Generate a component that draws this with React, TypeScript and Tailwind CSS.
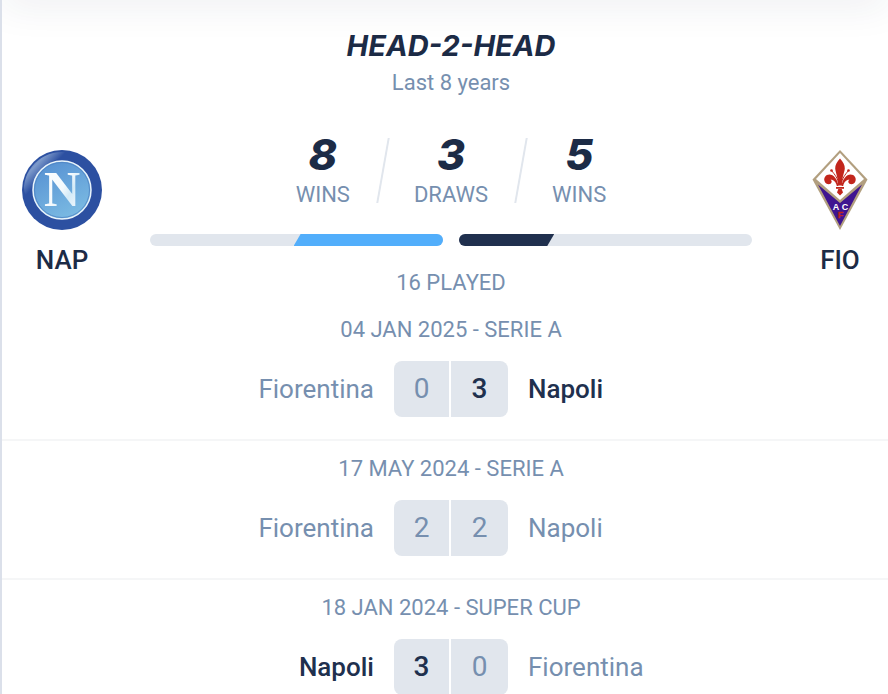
import clsx from "clsx";

const stats = [
  { value: 8, label: "WINS" },
  { value: 3, label: "DRAWS" },
  { value: 5, label: "WINS" },
];

const matches = [
  { date: "04 JAN 2025 - SERIE A", home: "Fiorentina", away: "Napoli", homeGoals: 0, awayGoals: 3 },
  { date: "17 MAY 2024 - SERIE A", home: "Fiorentina", away: "Napoli", homeGoals: 2, awayGoals: 2 },
  { date: "18 JAN 2024 - SUPER CUP", home: "Napoli", away: "Fiorentina", homeGoals: 3, awayGoals: 0 },
];

function NapoliCrest() {
  return (
    <svg viewBox="0 0 80 80" className="size-20" aria-hidden="true">
      <defs>
        <linearGradient id="nap-ring" x1="0.1" y1="0.1" x2="0.5" y2="0.5">
          <stop offset="0" stopColor="#2a4fa0" />
          <stop offset="0.35" stopColor="#7d9acb" />
          <stop offset="0.8" stopColor="#2c50a1" />
        </linearGradient>
        <linearGradient id="nap-disc" x1="0.2" y1="0" x2="0.7" y2="1">
          <stop offset="0" stopColor="#5690d2" />
          <stop offset="1" stopColor="#7cbce3" />
        </linearGradient>
        <linearGradient id="nap-letter" x1="0" y1="0" x2="1" y2="1">
          <stop offset="0" stopColor="#fff" />
          <stop offset="0.5" stopColor="#f4fafd" />
          <stop offset="0.65" stopColor="#d3eaf7" />
          <stop offset="1" stopColor="#fff" />
        </linearGradient>
      </defs>
      <circle cx="40" cy="40" r="40" fill="#2c50a1" />
      <path d="M2 36A38 38 0 0 1 52 4C34 7 19 17 12 34Q9 44 12 56Q1 46 2 36Z" fill="url(#nap-ring)" />
      <circle cx="40" cy="40" r="29" fill="url(#nap-disc)" stroke="#e9f4fb" strokeWidth="1.5" />
      <circle cx="40" cy="40" r="27.5" fill="none" stroke="#4e83c3" strokeWidth="0.8" />
      <text
        x="40"
        y="56"
        textAnchor="middle"
        fill="url(#nap-letter)"
        className="font-['Liberation_Serif',serif] text-[50px] font-bold"
      >
        N
      </text>
    </svg>
  );
}

function FiorentinaCrest() {
  return (
    <svg viewBox="0 0 80 80" className="size-20" aria-hidden="true">
      <path d="M40 0L67.500 29.500L40 80L12.500 29.500Z" fill="#b29f7f" />
      <path d="M40 3L64 29L40 50L16 29Z" fill="#fff" />
      <path d="M18 34.500L40 53L62 34.500L40 76Z" fill="#3f1590" />
      <g fill="#c2261c">
        <path d="M40 8.500C37 12 35 15 35.200 18.500C35.600 23 38 27 38.200 35.500H41.800C42 27 44.400 23 44.800 18.500C45 15 43 12 40 8.500Z" />
        <path d="M38.500 36C37.500 29 33.500 24.500 29.500 24.500C25.500 24.500 23.500 28 24.500 31C25.300 33.800 28.500 35 30.500 33.800C32.200 32.500 32 30.500 30.500 29.800C33.500 29.500 36 32 36.800 36Z" />
        <path d="M41.500 36C42.500 29 46.500 24.500 50.500 24.500C54.500 24.500 56.500 28 55.500 31C54.700 33.800 51.500 35 49.500 33.800C47.800 32.500 48 30.500 49.500 29.800C46.500 29.500 44 32 43.200 36Z" />
        <path d="M36 37H44V38.800H36Z" />
        <path d="M38.300 39L37 42.500L40 45.500L43 42.500L41.700 39Z" />
        <circle cx="31.500" cy="20.500" r="1.300" />
        <circle cx="48.500" cy="20.500" r="1.300" />
      </g>
      <path
        d="M38.800 35C38 28 35 25 31.500 20.500M41.200 35C42 28 45 25 48.500 20.500"
        fill="none"
        stroke="#c2261c"
        strokeWidth="1"
      />
      <g textAnchor="middle" className="font-['Liberation_Sans',sans-serif] text-[9px] font-bold">
        <text x="36" y="60" fill="#fff">A</text>
        <text x="45" y="60" fill="#fff">C</text>
        <text x="40.500" y="67.500" fill="#c2261c" stroke="#c2261c" strokeWidth="0.4">F</text>
      </g>
    </svg>
  );
}

function Team({ name, children }: { name: string; children: React.ReactNode }) {
  return (
    <div className="flex w-20 shrink-0 flex-col items-center pt-3.5">
      {children}
      <p className="mt-3.5 text-[26px] leading-8 font-medium text-[#1c2b46]">{name}</p>
    </div>
  );
}

function Summary() {
  return (
    <div className="flex flex-1 flex-col items-center">
      <div className="flex gap-8">
        {stats.map((stat, i) => (
          <div key={i} className="flex gap-[30px]">
            {i > 0 && <span className="mt-0.5 h-[65px] w-0.5 -skew-x-10 bg-[#e1e6ed]" />}
            <p className="flex flex-col items-center">
              <span className="font-['Inter',sans-serif] text-[43px] leading-9 font-extrabold text-[#1c2b46] italic">
                {stat.value}
              </span>
              <span className="mt-[9px] text-[22px] leading-7">{stat.label}</span>
            </p>
          </div>
        ))}
      </div>

      <div className="mt-[25px] grid w-full grid-cols-2 gap-4">
        <div className="flex h-3 justify-end overflow-hidden rounded-full bg-[#e1e6ed]">
          <div className="w-[51%] bg-[#52aefb] [clip-path:polygon(7px_0,100%_0,100%_100%,0_100%)]" />
        </div>
        <div className="flex h-3 overflow-hidden rounded-full bg-[#e1e6ed]">
          <div className="w-[32.5%] bg-[#20304e] [clip-path:polygon(0_0,100%_0,calc(100%-7px)_100%,0_100%)]" />
        </div>
      </div>

      <p className="mt-[23px] text-[22px] leading-7">16 PLAYED</p>
    </div>
  );
}

function MatchRow({ match }: { match: (typeof matches)[number] }) {
  const homeWon = match.homeGoals > match.awayGoals;
  const awayWon = match.awayGoals > match.homeGoals;
  const winner = "font-medium text-[#20304e]";

  return (
    <li className="border-b-2 border-[#f5f6f7] pt-3.5 pr-2 pb-[22px] pl-5">
      <p className="text-center text-[22px] leading-7">{match.date}</p>
      <div className="mt-[17px] grid grid-cols-[1fr_auto_1fr] items-center gap-5 text-[26px] leading-8">
        <span className={clsx("text-right", homeWon && winner)}>{match.home}</span>
        <div className="flex h-14 overflow-hidden rounded-lg bg-[#e1e6ed] text-[28px]">
          <span className={clsx("flex w-[57px] items-center justify-center border-r-2 border-white", homeWon && winner)}>
            {match.homeGoals}
          </span>
          <span className={clsx("flex w-[57px] items-center justify-center", awayWon && winner)}>
            {match.awayGoals}
          </span>
        </div>
        <span className={clsx(awayWon && winner)}>{match.away}</span>
      </div>
    </li>
  );
}

export default function App() {
  return (
    <main className="relative min-h-screen overflow-hidden border-l-2 border-[#dbe0ea] bg-white font-['Roboto',sans-serif] text-[#768faf]">
      <div className="absolute inset-x-0 -top-5 h-5 shadow-[0_0_40px_rgba(32,48,78,0.13)]" />

      <header className="pt-[30px] pr-2 pl-5 text-center">
        <h1 className="font-['Inter',sans-serif] text-[29px] leading-8 font-bold text-[#1c2b46] italic">
          HEAD-2-HEAD
        </h1>
        <p className="mt-[7px] text-[22px] leading-7">Last 8 years</p>
      </header>

      <section className="mt-[39px] flex gap-12 pr-2 pl-5">
        <Team name="NAP">
          <NapoliCrest />
        </Team>
        <Summary />
        <Team name="FIO">
          <FiorentinaCrest />
        </Team>
      </section>

      <ul className="mt-[5px]">
        {matches.map((match) => (
          <MatchRow key={match.date} match={match} />
        ))}
      </ul>
    </main>
  );
}
